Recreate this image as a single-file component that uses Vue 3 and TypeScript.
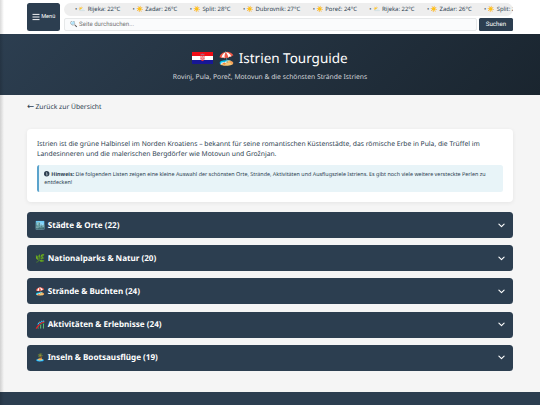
<template>
    <div class="page">
        <header class="topbar">
            <button class="menu-button">
                <svg class="menu-icon" viewBox="0 0 8 8">
                    <path d="M0.5 1.4h7M0.5 4h7M0.5 6.6h7" stroke="#fff" stroke-width="0.95" />
                </svg>
                <span>Menü</span>
            </button>
            <div class="tools">
                <div class="ticker">
                    <div class="ticker-track">
                        <span
                            v-for="(w, i) in weather"
                            v-bind:key="i"
                            class="weather">• <span class="weather-icon">{{ w.icon }}</span> {{ w.city }}: {{ w.temp }}°C</span>
                    </div>
                </div>
                <form class="search" v-on:submit.prevent>
                    <input v-model="query" class="search-input" type="text" placeholder="🔍 Seite durchsuchen...">
                    <button class="search-button">Suchen</button>
                </form>
            </div>
        </header>

        <section class="hero">
            <h1 class="title">
                <svg class="flag" viewBox="0 0 21 12">
                    <rect width="21" height="4" fill="#f00d16" />
                    <rect y="4" width="21" height="4" fill="#fff" />
                    <rect y="8" width="21" height="4" fill="#171796" />
                    <path d="M8.5 3.2h4v3.6q0 2-2 2.4q-2-.4-2-2.4z" fill="#e8303a" />
                    <path d="M9.3 4h.8v.8h-.8zM10.9 4h.8v.8h-.8zM8.5 4.8h.8v.8h-.8zM10.1 4.8h.8v.8h-.8zM11.7 4.8h.8v.8h-.8zM9.3 5.6h.8v.8h-.8zM10.9 5.6h.8v.8h-.8zM10.1 6.4h.8v.8h-.8zM9.3 7.2h.8v.8h-.8zM10.9 7.2h.8v.8h-.8z" fill="#fff" />
                    <path d="M8.5 3l.2-1.4.9.4.9-.6.9.6.9-.4.2 1.4z" fill="#b0607c" />
                </svg>
                <span class="title-icon">🏖️</span>
                <span class="title-text">Istrien Tourguide</span>
            </h1>
            <p class="subtitle">Rovinj, Pula, Poreč, Motovun &amp; die schönsten Strände Istriens</p>
        </section>

        <main class="content">
            <a class="back"><span class="back-arrow">←</span>Zurück zur Übersicht</a>

            <div class="intro">
                <p class="intro-text">Istrien ist die grüne Halbinsel im Norden Kroatiens – bekannt für seine romantischen Küstenstädte, das römische Erbe in Pula, die Trüffel im<br>Landesinneren und die malerischen Bergdörfer wie Motovun und Grožnjan.</p>
                <div class="hint">
                    <svg class="hint-icon" viewBox="0 0 16 16">
                        <circle cx="8" cy="8" r="8" fill="#2c3e50" />
                        <path d="M6.3 7h2.5v4.5M6 11.8h4.4" fill="none" stroke="#e8f4f8" stroke-width="1.6" />
                        <circle cx="8" cy="4.2" r="1.2" fill="#e8f4f8" />
                    </svg>
                    <strong>Hinweis:</strong> Die folgenden Listen zeigen eine kleine Auswahl der schönsten Orte, Strände, Aktivitäten und Ausflugsziele Istriens. Es gibt noch viele weitere versteckte Perlen zu<br>entdecken!
                </div>
            </div>

            <div class="sections">
                <button
                    v-for="s in sections"
                    v-bind:key="s.name"
                    class="section">
                        <span class="section-icon">{{ s.icon }}</span>
                        <span class="section-name">{{ s.name }} ({{ s.count }})</span>
                        <svg class="chevron" viewBox="0 0 7 5">
                            <path d="M0.9 1.1l2.6 2.5 2.6-2.5" fill="none" stroke="#fff" stroke-width="1.15" stroke-linecap="round" stroke-linejoin="round" />
                        </svg>
                </button>
            </div>
        </main>

        <footer class="footer"></footer>
        <div class="edge"></div>
    </div>
</template>

<script setup lang="ts">

import { ref } from "vue";

interface Weather {
    icon: string,
    city: string,
    temp: number
}

interface Section {
    icon: string,
    name: string,
    count: number
}

const query = ref("")

const cities: Weather[] = [
    { icon: "⛅", city: "Rijeka", temp: 22 },
    { icon: "☀️", city: "Zadar", temp: 26 },
    { icon: "☀️", city: "Split", temp: 28 },
    { icon: "☀️", city: "Dubrovnik", temp: 27 },
    { icon: "☀️", city: "Poreč", temp: 24 }
]

const weather = [...cities, ...cities.slice(0, 3)]

const sections: Section[] = [
    { icon: "🏙️", name: "Städte & Orte", count: 22 },
    { icon: "🌿", name: "Nationalparks & Natur", count: 20 },
    { icon: "🏖️", name: "Strände & Buchten", count: 24 },
    { icon: "🎢", name: "Aktivitäten & Erlebnisse", count: 24 },
    { icon: "🏝️", name: "Inseln & Bootsausflüge", count: 19 }
]

</script>

<style>

body {
    margin: 0;
    overflow: hidden;
}

</style>

<style scoped>

.page {
    position: relative;
    display: flex;
    flex-direction: column;
    width: 540px;
    height: 405px;
    overflow: hidden;
    box-sizing: border-box;
    background: #f5f5f5;
    color: #2c3e50;
    font-family: "Noto Sans", "Noto Color Emoji", sans-serif;
    text-rendering: geometricPrecision;
}

button {
    border: none;
    padding: 0;
    color: #fff;
    background: #2c3e50;
    font-family: inherit;
    text-rendering: inherit;
    cursor: pointer;
}

.topbar {
    display: flex;
    gap: 4px;
    height: 34px;
    padding: 2.5px 27px 0;
    box-sizing: border-box;
    flex: none;
    background: #fff;
}

.menu-button {
    display: flex;
    align-items: center;
    justify-content: center;
    gap: 1.5px;
    width: 33px;
    height: 28.5px;
    border-radius: 2.5px;
    font-family: Roboto, sans-serif;
    font-size: 5.6px;
}

.menu-icon {
    width: 8px;
    height: 8px;
}

.tools {
    flex: 1;
    min-width: 0;
}

.ticker {
    height: 13px;
    border-radius: 6.5px;
    overflow: hidden;
    background: #eee;
}

.ticker-track {
    display: flex;
    gap: 12.4px;
    padding-left: 11px;
    white-space: nowrap;
}

.weather {
    font-size: 5.9px;
    line-height: 13px;
}

.weather-icon {
    font-size: 5.9px;
}

.search {
    display: flex;
    gap: 2px;
    margin-top: 2.5px;
}

.search-input {
    flex: 1;
    min-width: 0;
    height: 13px;
    box-sizing: border-box;
    padding: 0 5px;
    border: 1px solid #e6e8e9;
    border-radius: 2px;
    background: #fafbfc;
    font-family: Roboto, "Noto Color Emoji", sans-serif;
    font-size: 6.1px;
    text-rendering: inherit;
}

.search-input::placeholder {
    color: #757575;
}

.search-button {
    width: 34px;
    height: 12.5px;
    border-radius: 1.5px;
    font-family: Roboto, sans-serif;
    font-size: 6.2px;
}

.hero {
    flex: none;
    height: 61px;
    box-sizing: border-box;
    padding-top: 14px;
    background: linear-gradient(135deg, #2c3e50, #1a252f);
    color: #fff;
    text-align: center;
}

.title {
    display: flex;
    align-items: center;
    justify-content: center;
    margin: 0;
    height: 20px;
    font-size: 13.5px;
    font-weight: 400;
    line-height: 20px;
}

.flag {
    width: 21px;
    height: 12px;
    margin-right: 5.5px;
}

.title-icon {
    margin-right: 3px;
}

.subtitle {
    margin: 3.5px 0 0;
    font-size: 6.75px;
    line-height: 10px;
    color: #d5d8db;
}

.content {
    flex: none;
    height: 296.5px;
    box-sizing: border-box;
    padding: 7px 27px 0;
}

.back {
    display: flex;
    height: 10px;
    font-size: 6.75px;
    line-height: 10px;
}

.back-arrow {
    width: 8.5px;
    font-family: "DejaVu Sans", sans-serif;
    font-size: 8.5px;
}

.intro {
    height: 73px;
    margin-top: 17px;
    box-sizing: border-box;
    padding: 9.5px 10px 0;
    border-radius: 4px;
    background: #fff;
    box-shadow: 0 1px 4px rgba(0, 0, 0, 0.07);
}

.intro-text {
    margin: 0;
    font-size: 6.75px;
    line-height: 10.5px;
    white-space: nowrap;
}

.hint {
    height: 27px;
    margin-top: 5px;
    box-sizing: border-box;
    padding: 5.5px 0 0 5.3px;
    border-left: 2px solid #5ba3cc;
    border-radius: 2.5px;
    background: #e8f4f8;
    font-size: 5.4px;
    line-height: 8px;
    white-space: nowrap;
}

.hint-icon {
    width: 5.4px;
    height: 5.4px;
    margin-right: 1.6px;
    vertical-align: -0.7px;
}

.sections {
    display: flex;
    flex-direction: column;
    gap: 7.2px;
    margin-top: 10px;
}

.section {
    display: flex;
    align-items: center;
    height: 26px;
    padding: 0 8px;
    border-radius: 3.5px;
    font-size: 8.1px;
    font-weight: 700;
}

.section-icon {
    width: 12.7px;
    text-align: left;
    font-size: 8.1px;
}

.section-name {
    flex: 1;
    text-align: left;
}

.chevron {
    width: 7px;
    height: 5px;
}

.footer {
    flex: 1;
    background: #2c3e50;
}

/* shadow of the closed side menu */
.edge {
    position: absolute;
    top: 0;
    left: 0;
    width: 4px;
    height: 405px;
    background: linear-gradient(90deg, rgba(0, 0, 0, 0.15), rgba(0, 0, 0, 0));
}

</style>
